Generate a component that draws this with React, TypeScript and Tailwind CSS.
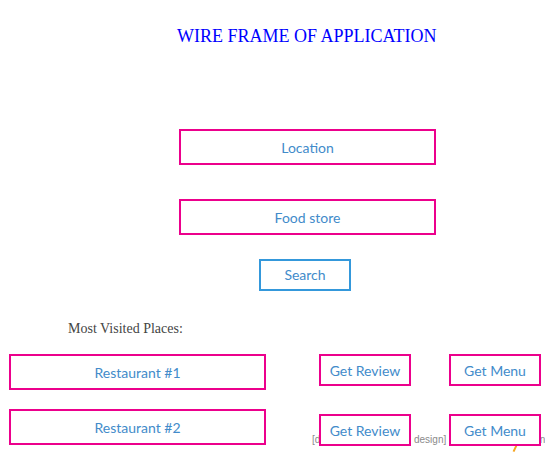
export default function App() {
  const box =
    "flex items-center justify-center border-2 border-[#ec008c] bg-white text-[14px] text-[#428bca]";

  return (
    <div className="relative h-[455px] w-[550px] overflow-hidden bg-white font-['Lato',sans-serif]">
      {/* watermark behind the last row */}
      <div className="absolute left-[312px] top-[432px] z-0 flex whitespace-nowrap font-['Liberation_Sans',sans-serif] text-[10px] text-[#8a8a8a]">
        <span className="inline-block w-[102px] overflow-hidden">[drawn with wireframe</span>
        <span>design]</span>
        <div className="ml-[6px] flex w-[93px] justify-end overflow-hidden">
          <span className="shrink-0">made with mockup plugin n</span>
        </div>
      </div>
      <div className="absolute left-[514px] top-[445px] z-0 h-[7px] w-[2px] rotate-[25deg] bg-[#f5a623]" />

      <div className="relative z-10 flex flex-col">
        {/* title */}
        <div className="mt-[24px] flex h-[24px] items-center pl-[177px] font-['Liberation_Serif',serif] text-[18px] text-[#0000ff]">
          WIRE FRAME OF APPLICATION
        </div>

        {/* search form */}
        <div className={`${box} ml-[179px] mt-[81px] h-[36px] w-[257px]`}>Location</div>
        <div className={`${box} ml-[179px] mt-[34px] h-[36px] w-[257px]`}>Food store</div>
        <div className="ml-[259px] mt-[24px] flex h-[32px] w-[92px] items-center justify-center border-2 border-[#3498db] bg-white pb-[1px] text-[14px] text-[#428bca]">
          Search
        </div>

        {/* most visited */}
        <div className="ml-[68px] mt-[30px] h-[16px] font-['Liberation_Serif',serif] text-[14px] leading-[16px] text-[#444]">
          Most Visited Places:
        </div>

        <div className="mt-[17px] flex items-start">
          <div className={`${box} ml-[9px] h-[36px] w-[257px]`}>Restaurant #1</div>
          <div className={`${box} ml-[53px] h-[32px] w-[92px]`}>Get Review</div>
          <div className={`${box} ml-[38px] h-[32px] w-[92px]`}>Get Menu</div>
        </div>

        <div className="mt-[19px] flex items-start">
          <div className={`${box} ml-[9px] h-[36px] w-[257px]`}>Restaurant #2</div>
          <div className={`${box} ml-[53px] mt-[5px] h-[32px] w-[92px]`}>Get Review</div>
          <div className={`${box} ml-[38px] mt-[5px] h-[32px] w-[92px]`}>Get Menu</div>
        </div>
      </div>
    </div>
  );
}
